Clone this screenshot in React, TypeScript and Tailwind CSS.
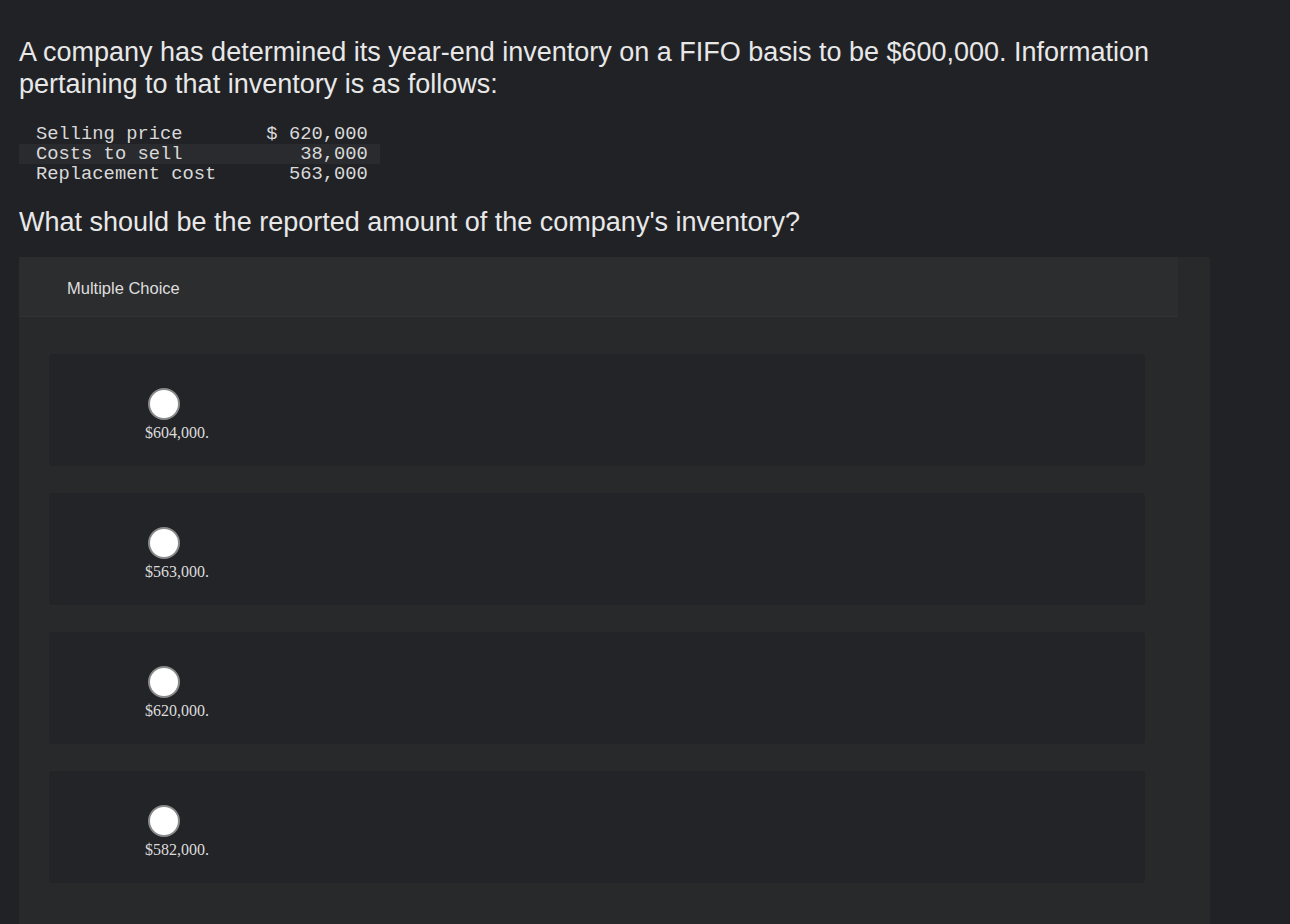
import React from "react";

const options = ["$604,000.", "$563,000.", "$620,000.", "$582,000."];

const rows: { label: string; value: string; hl?: boolean }[] = [
  { label: "Selling price", value: "$ 620,000" },
  { label: "Costs to sell", value: "38,000", hl: true },
  { label: "Replacement cost", value: "563,000" },
];

export default function App() {
  return (
    <div className="min-h-[924px] w-full overflow-hidden bg-[#212226] text-[#e6e6e6]" style={{ fontFamily: '"Liberation Sans", Arial, sans-serif' }}>
      <div className="pl-[19px] pr-[80px] pt-[36px]">
        <p className="text-[27px] leading-[32px] text-[#e8e8e8]">
          A company has determined its year-end inventory on a FIFO basis to be $600,000. Information pertaining to that inventory is as follows:
        </p>
        <table
          className="mt-[24px] border-collapse text-[18.8px] text-[#d9d9d9]"
          style={{ fontFamily: '"Liberation Mono", "Courier New", monospace' }}
        >
          <tbody>
            {rows.map((r) => (
              <tr key={r.label} className={r.hl ? "bg-[#2a2b2e]" : ""}>
                <td className="h-[20px] p-0 pl-[17px] pr-[50px] leading-[20px] whitespace-pre">{r.label}</td>
                <td className="h-[20px] p-0 pr-[12px] text-right leading-[20px] whitespace-pre">{r.value}</td>
              </tr>
            ))}
          </tbody>
        </table>
        <p className="mt-[22px] text-[27px] leading-[32px] text-[#e8e8e8]">
          What should be the reported amount of the company's inventory?
        </p>
      </div>
      <div className="ml-[19px] mt-[19px] w-[1191px] rounded-t-[3px] bg-[#28292b] pb-[80px]">
        <div className="flex h-[60px] w-[1159px] items-center border-b border-[#313235] bg-[#2c2d2f] pl-[48px] pt-[3px] text-[16.5px] text-[#dedede]">
          Multiple Choice
        </div>
        <div className="flex flex-col gap-[27px] pl-[30px] pt-[37px]">
          {options.map((o) => (
            <div key={o} className="h-[112px] w-[1096px] rounded-[4px] bg-[#232427] pl-[96px] pt-[34px]">
              <div className="ml-[3px] h-[32px] w-[32px] rounded-full border-2 border-[#8a8a8a] bg-white" />
              <div
                className="mt-[4px] text-[16px] leading-[18px] text-[#dcdcdc]"
                style={{ fontFamily: '"Liberation Serif", "Times New Roman", serif' }}
              >
                {o}
              </div>
            </div>
          ))}
        </div>
      </div>
    </div>
  );
}
